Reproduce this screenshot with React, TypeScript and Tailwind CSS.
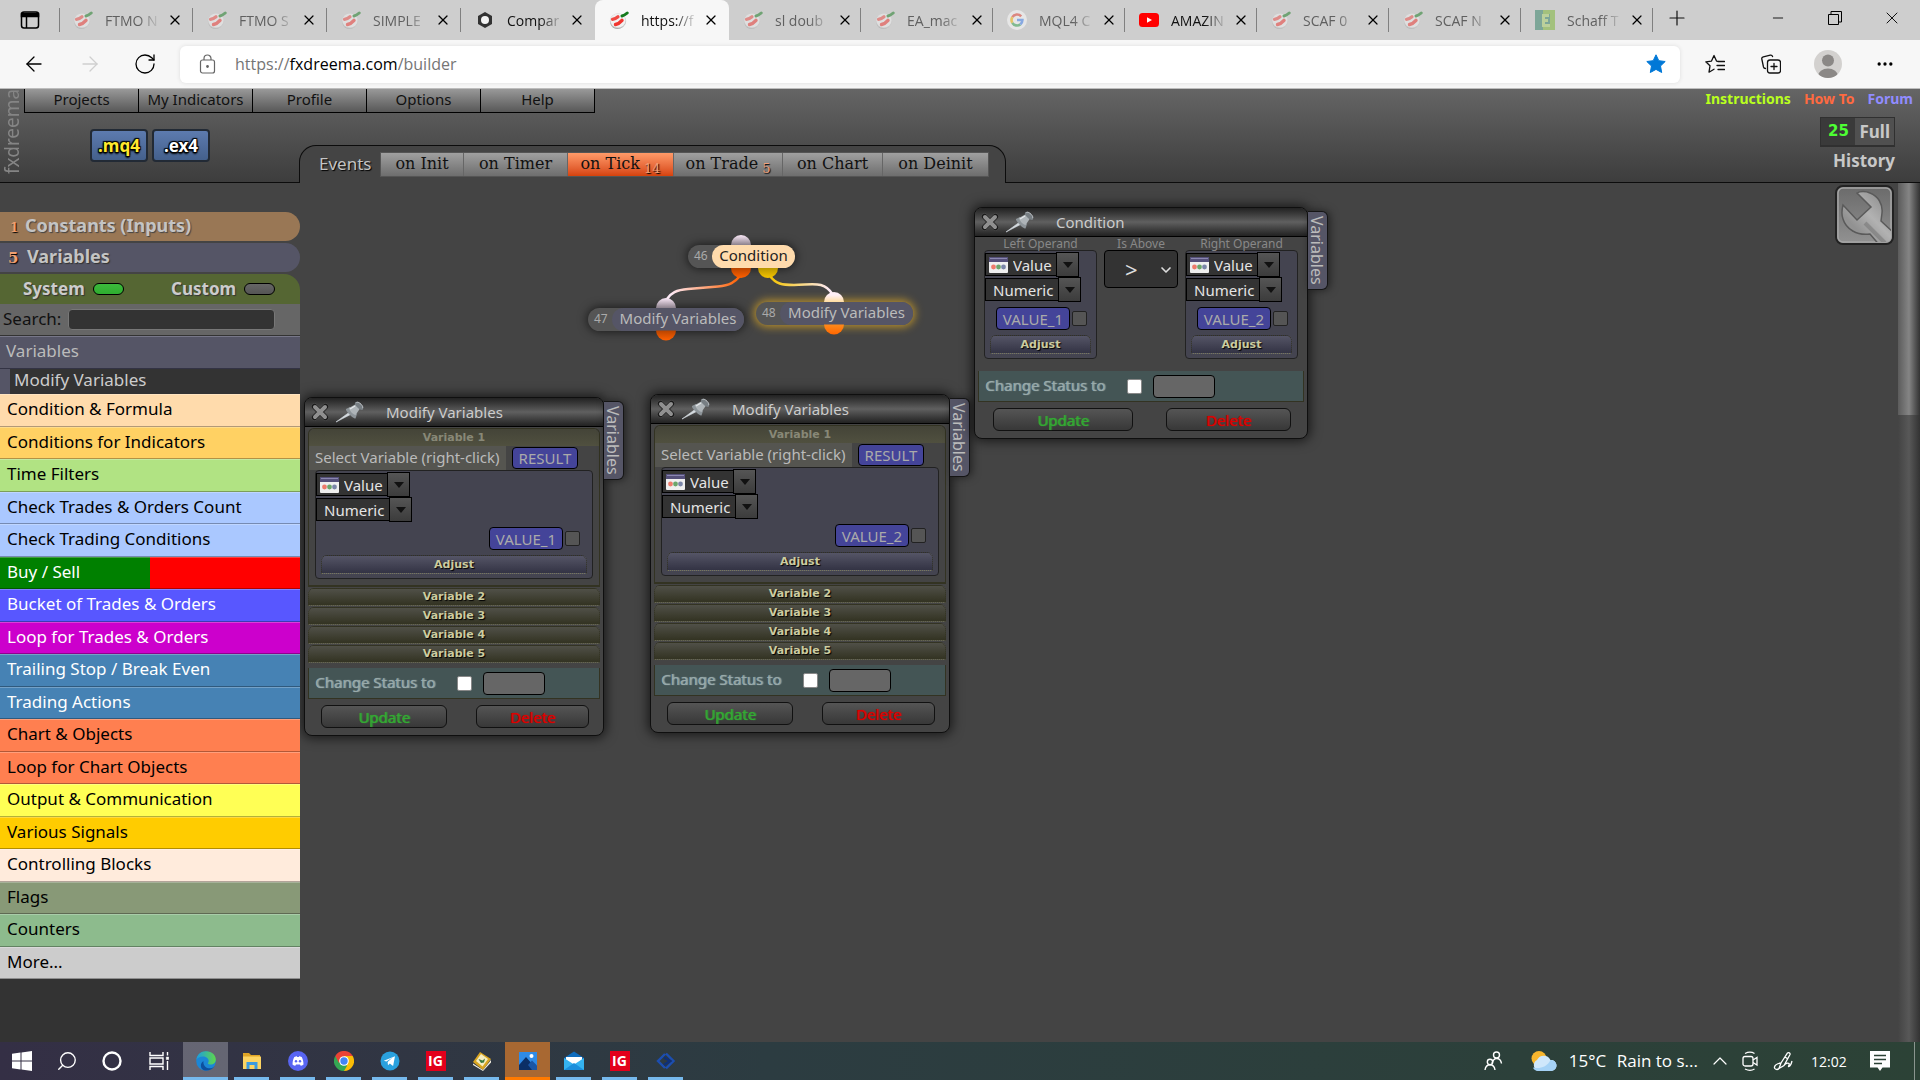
import React from "react";
import {
  ArrowLeft,
  ArrowRight,
  RotateCw,
  X,
  Plus,
  Minus,
  MoreHorizontal,
  ChevronDown,
  ChevronUp,
  Search,
} from "lucide-react";

/* ---------- Browser chrome ---------- */

type Fav = "fx" | "hex" | "google" | "youtube" | "e";

const browserTabs: { title: string; icon: Fav; faded?: boolean; active?: boolean }[] = [
  { title: "FTMO N", icon: "fx", faded: true },
  { title: "FTMO S", icon: "fx", faded: true },
  { title: "SIMPLE", icon: "fx", faded: true },
  { title: "Compar", icon: "hex" },
  { title: "https://f", icon: "fx", active: true },
  { title: "sl doub", icon: "fx", faded: true },
  { title: "EA_mac", icon: "fx", faded: true },
  { title: "MQL4 C", icon: "google", faded: true },
  { title: "AMAZIN", icon: "youtube" },
  { title: "SCAF 0", icon: "fx", faded: true },
  { title: "SCAF N", icon: "fx", faded: true },
  { title: "Schaff T", icon: "e", faded: true },
];

function Favicon({ kind }: { kind: Fav }) {
  if (kind === "fx")
    return (
      <svg viewBox="0 0 20 20" className="size-5">
        <ellipse cx="8.500" cy="13" rx="7" ry="6" fill="#9a9a9a" />
        <ellipse cx="9" cy="11" rx="8.200" ry="7.500" fill="#c4c4c4" />
        <ellipse cx="9" cy="10.500" rx="7.600" ry="6.900" fill="#f1f1f1" />
        <path d="M3.500 9.300c2-.2 3.800-1 5.500-2.500" stroke="#f04a44" strokeWidth="3.200" strokeLinecap="round" fill="none" />
        <path d="M6.500 14.500c2.500-.6 4.800-2.200 6.500-4.200" stroke="#f0352f" strokeWidth="3.400" strokeLinecap="round" fill="none" />
        <path d="M13 6c1.800-.4 3.500-1.500 5.200-3" stroke="#157a1d" strokeWidth="3" strokeLinecap="round" fill="none" />
      </svg>
    );
  if (kind === "hex")
    return (
      <svg viewBox="0 0 20 20" className="size-5">
        <path d="M10 2l7 4v8l-7 4-7-4V6z" fill="#333" />
        <circle cx="10" cy="10" r="4" fill="#f4f4f4" />
      </svg>
    );
  if (kind === "google")
    return (
      <svg viewBox="0 0 20 20" className="size-5">
        <circle cx="10" cy="10" r="10" fill="#fff" />
        <path d="M14.200 6.300A5.500 5.500 0 0 0 5.300 7.200" stroke="#ea4335" strokeWidth="2.600" fill="none" />
        <path d="M5.300 7.200a5.500 5.500 0 0 0 0 5.600" stroke="#fbbc05" strokeWidth="2.600" fill="none" />
        <path d="M5.300 12.800a5.500 5.500 0 0 0 8 1.600" stroke="#34a853" strokeWidth="2.600" fill="none" />
        <path d="M10 10h5.400c0 2-.8 3.400-2.100 4.400" stroke="#4285f4" strokeWidth="2.600" fill="none" />
      </svg>
    );
  if (kind === "youtube")
    return (
      <svg viewBox="0 0 20 20" className="size-5">
        <rect x="0" y="3" width="20" height="14" rx="3.500" fill="#f00" />
        <path d="M8 7.200v5.600l5-2.800z" fill="#fff" />
      </svg>
    );
  return (
    <svg viewBox="0 0 20 20" className="size-5">
      <path d="M0 0h20v20H0z" fill="#2f7f63" />
      <path d="M8 0h12v20h-12v-5h7V4H8z" fill="#79b52e" />
      <path d="M8 4h6v3H10v2h3v3h-3v2h5v3H7V4z" fill="#a9d36a" />
    </svg>
  );
}

function BrowserTabs() {
  return (
    <div className="flex h-10 items-stretch bg-[#cecece]">
      <button aria-label="Tab actions" className="flex w-[59px] items-center justify-center">
        <svg viewBox="0 0 20 20" className="size-5" fill="none" stroke="#000" strokeWidth="1.500">
          <rect x="1.500" y="2" width="17" height="16" rx="2.500" />
          <path d="M1.500 3.500h17v3h-17z" fill="#000" />
          <path d="M6.500 6v12" />
        </svg>
      </button>
      {browserTabs.map((t, i) => {
        const bare = t.active || browserTabs[i + 1]?.active;
        return (
          <div
            key={t.title}
            className={
              (i < 5 ? "w-[134px] " : "w-[132px] ") +
              (t.active
                ? "flex items-center rounded-t-lg bg-[#f7f7f7] pl-3.5"
                : "relative flex items-center pl-3.5")
            }
          >
            {!t.active && i === 0 && <span className="absolute left-0 top-2 h-6 w-px bg-[#808080]" />}
            <span className={t.faded ? "opacity-50" : ""}>
              <Favicon kind={t.icon} />
            </span>
            <span
              className={
                t.faded
                  ? "ml-3 w-[56px] whitespace-nowrap text-[14px] text-[#606060] [mask-image:linear-gradient(to_right,black_60%,transparent)]"
                  : "ml-3 w-[56px] whitespace-nowrap text-[14px] text-[#111] [mask-image:linear-gradient(to_right,black_60%,transparent)]"
              }
            >
              {t.title}
            </span>
            <button aria-label={"Close " + t.title} className="ml-1.5 flex size-4 items-center justify-center text-black">
              <X className="size-4 shrink-0" strokeWidth={1.8} />
            </button>
            {!bare && <span className="absolute right-0 top-2 h-6 w-px bg-[#808080]" />}
          </div>
        );
      })}
      <button aria-label="New tab" className="flex w-12 items-center justify-center pb-1 text-[#111]">
        <Plus className="size-6" strokeWidth={1.2} />
      </button>
      <div className="flex flex-1 justify-end">
        <button aria-label="Minimise" className="flex w-[57px] items-center justify-center pb-1">
          <Minus className="size-4" strokeWidth={1.3} />
        </button>
        <button aria-label="Restore" className="flex w-[57px] items-center justify-center pb-1">
          <svg viewBox="0 0 14 14" className="size-3.5" fill="none" stroke="#000">
            <path d="M.5 3.500h10v10H.5zM3 3V.5h10.500V11H11" />
          </svg>
        </button>
        <button aria-label="Close window" className="flex w-[57px] items-center justify-center pb-1">
          <X className="size-5" strokeWidth={1.1} />
        </button>
      </div>
    </div>
  );
}

function Toolbar() {
  return (
    <div className="flex h-[49px] items-center border-b border-[#bdbdbd] bg-[#f7f7f7] pl-[22px]">
      <button aria-label="Back" className="text-black">
        <ArrowLeft className="size-6" strokeWidth={1.3} />
      </button>
      <button aria-label="Forward" className="ml-8 text-[#cfcfcf]">
        <ArrowRight className="size-6" strokeWidth={1.3} />
      </button>
      <button aria-label="Refresh" className="ml-[31px] text-black">
        <RotateCw className="size-6" strokeWidth={1.3} />
      </button>
      <div className="ml-[23px] flex h-[37px] flex-1 items-center rounded-md bg-white pl-[19px] pr-3.5 shadow-[0_0_4px_#ddd]">
        <svg viewBox="0 0 18 20" className="h-5 w-[18px]" fill="none" stroke="#666" strokeWidth="1.200">
          <rect x="1.500" y="6" width="14" height="13" rx="2" />
          <path d="M5 6V4.500a3.500 3.500 0 0 1 7 0V6" />
          <circle cx="8.500" cy="12.500" r=".8" fill="#444" />
        </svg>
        <button className="ml-[18px] flex-1 text-left text-[16px] leading-6 text-[#757575]">
          https://<span className="text-black">fxdreema.com</span>/builder
        </button>
        <button aria-label="Favourite">
          <svg viewBox="0 0 20 20" className="size-5">
            <path
              d="M10 .8l2.800 5.900 6.400.8-4.700 4.500 1.200 6.500L10 15.400l-5.700 3.100 1.200-6.500L.8 7.500l6.400-.8z"
              fill="#0078d7"
              stroke="#0078d7"
              strokeLinejoin="round"
            />
          </svg>
        </button>
      </div>
      <div className="flex items-center gap-9 px-[25px]">
        <button aria-label="Favourites">
          <svg viewBox="0 0 20 20" className="size-5" fill="none" stroke="#111" strokeWidth="1.300" strokeLinejoin="round" strokeLinecap="round">
            <path d="M13 7.300l-1.500-.2L9 1.500 6.500 7.100.8 7.800 5 11.800 4 18.200l5-3" />
            <path d="M13 7.500h6.500M12 11.500h7.500M13 15.500h6.500" />
          </svg>
        </button>
        <button aria-label="Collections">
          <svg viewBox="0 0 20 20" className="size-5" fill="none" stroke="#111" strokeWidth="1.300" strokeLinejoin="round" strokeLinecap="round">
            <path d="M4.500 14.500c-1 0-1.800-.7-2-1.500L.8 5c-.2-1 .4-1.900 1.500-2.200l7-1.700c1.200-.2 2 .4 2.300 1.500" />
            <rect x="6.500" y="6" width="13" height="13" rx="2.500" />
            <path d="M13 9.500v6M10 12.500h6" />
          </svg>
        </button>
        <button aria-label="Profile picture" className="-mx-[3px]">
          <svg viewBox="0 0 28 28" className="size-7">
            <clipPath id="av">
              <circle cx="14" cy="14" r="14" />
            </clipPath>
            <circle cx="14" cy="14" r="14" fill="#d3d1cf" />
            <g clipPath="url(#av)" fill="#8b8886">
              <circle cx="14" cy="10.500" r="6" />
              <ellipse cx="14" cy="26" rx="10" ry="7.500" />
            </g>
          </svg>
        </button>
        <button aria-label="Settings and more">
          <MoreHorizontal className="size-5" strokeWidth={2} />
        </button>
      </div>
    </div>
  );
}

/* ---------- Application header ---------- */

const menus = ["Projects", "My Indicators", "Profile", "Options", "Help"];

const events = [
  { label: "on Init", cls: "w-[83px]" },
  { label: "on Timer", cls: "w-[104px]" },
  { label: "on Tick", cls: "w-[106px]", count: "14", active: true },
  { label: "on Trade", cls: "w-[109px]", count: "5" },
  { label: "on Chart", cls: "w-[100px]" },
  { label: "on Deinit", cls: "w-[105px]" },
];

function AppHeader() {
  return (
    <header className="flex h-[94px] shrink-0 border-b border-[#0c0c0c] bg-linear-to-b from-[#656565] to-[#3d3d3d] font-['Noto_Sans',sans-serif]">
      <div className="flex w-6 justify-center pb-2 text-[19px] leading-[24px] text-[#858585]">
        <span className="rotate-180 [writing-mode:vertical-rl]">fxdreema</span>
      </div>
      <div className="flex flex-col">
        <nav className="flex h-6 self-start border-b border-l border-black">
          {menus.map((m) => (
            <button
              key={m}
              className="w-[114px] border-r border-black bg-linear-to-b from-[#999] to-[#585858] pb-1 text-[15px] leading-[18px] text-[#111]"
            >
              {m}
            </button>
          ))}
        </nav>
        <div className="flex flex-1">
          <div className="flex items-start gap-1 pl-[66px] pt-4">
            <button className="h-[33px] w-[58px] rounded-sm border-2 border-[#222a35] bg-linear-to-b from-[#5d7baf] to-[#44608c] text-[17px] font-bold leading-7 text-[#ffe92e] [text-shadow:-1px_-1px_1px_#000,1px_1px_1px_#000,1px_-1px_1px_#000,-1px_1px_1px_#000,0_2px_2px_#000]">
              .mq4
            </button>
            <button className="h-[33px] w-[58px] rounded-sm border-2 border-[#222a35] bg-linear-to-b from-[#5d7baf] to-[#44608c] text-[17px] font-bold leading-7 text-white [text-shadow:-1px_-1px_1px_#000,1px_1px_1px_#000,1px_-1px_1px_#000,-1px_1px_1px_#000,0_2px_2px_#000]">
              .ex4
            </button>
          </div>
          <div className="-mb-px ml-[89px] flex h-[38px] items-start self-end rounded-t-[17px] border-x border-t border-[#0c0c0c] bg-[#444] px-[19px] pr-4 pt-[6px]">
            <span className="w-[61px] text-[17px] leading-6 text-[#c4c4c4] [text-shadow:1px_1px_1px_#000]">Events</span>
            <div className="flex border border-[#555]">
              {events.map((e) => (
                <button
                  key={e.label}
                  className={
                    e.cls +
                    " flex h-[23px] justify-center whitespace-nowrap border-r border-[#666] font-['DejaVu_Serif',serif] text-[16px] leading-[22px] text-[#111] last:border-r-0 " +
                    (e.active
                      ? "bg-linear-to-b from-[#ff9a68] to-[#d5420a]"
                      : "bg-linear-to-b from-[#a0a0a0] to-[#6e6e6e]")
                  }
                >
                  {e.label}
                  {e.count && (
                    <span className="ml-1 text-[13px] leading-8 text-[#f0a078] [text-shadow:1px_1px_1px_#000]">{e.count}</span>
                  )}
                </button>
              ))}
            </div>
          </div>
        </div>
      </div>
      <div className="flex flex-1 flex-col items-end text-[#c8c8c8]">
        <nav className="flex gap-[13px] pr-[7px] text-[14px] font-bold leading-5">
          <a href="#instructions" className="text-[#b9ff1e]">Instructions</a>
          <a href="#howto" className="text-[#ff6a40]">How To</a>
          <a href="#forum" className="text-[#918cff]">Forum</a>
        </nav>
        <div className="mr-[25px] mt-2 flex h-[30px] border border-b-2 border-[#303030] bg-[#505050] text-[17px] font-bold leading-[26px]">
          <span className="w-[34px] bg-[#3a3a3a] text-center font-['DejaVu_Sans',sans-serif] text-[15px] text-[#4dff33]">25</span>
          <button className="px-1">Full</button>
        </div>
        <button className="mr-[25px] mt-0.5 text-[17px] font-bold leading-6">History</button>
      </div>
    </header>
  );
}

/* ---------- Sidebar ---------- */

const categories: { label: string; cls: string }[] = [
  { label: "Condition & Formula", cls: "bg-[#ffdbac] text-black" },
  { label: "Conditions for Indicators", cls: "bg-[#ffd163] text-black" },
  { label: "Time Filters", cls: "bg-[#b1e383] text-black" },
  { label: "Check Trades & Orders Count", cls: "bg-[#aac8ff] text-black" },
  { label: "Check Trading Conditions", cls: "bg-[#aac8ff] text-black" },
  { label: "Buy / Sell", cls: "bg-linear-to-r from-[#008000] from-50% to-[#f00] to-50% text-white" },
  { label: "Bucket of Trades & Orders", cls: "bg-[#5857ff] text-white" },
  { label: "Loop for Trades & Orders", cls: "bg-[#cc00cc] text-white" },
  { label: "Trailing Stop / Break Even", cls: "bg-[#4682b4] text-white" },
  { label: "Trading Actions", cls: "bg-[#4682b4] text-white" },
  { label: "Chart & Objects", cls: "bg-[#ff7f50] text-black" },
  { label: "Loop for Chart Objects", cls: "bg-[#ff7f50] text-black" },
  { label: "Output & Communication", cls: "bg-[#ffff55] text-black" },
  { label: "Various Signals", cls: "bg-[#ffcc00] text-black" },
  { label: "Controlling Blocks", cls: "bg-[#ffebdc] text-black" },
  { label: "Flags", cls: "bg-[#889977] text-black" },
  { label: "Counters", cls: "bg-[#8dbb8d] text-black" },
  { label: "More...", cls: "bg-[#ccc] text-black" },
];

const toggle =
  "h-3 w-[31px] appearance-none rounded-full border border-black bg-linear-to-b from-[#666] to-[#555] checked:from-[#3cb93c] checked:to-[#2fae2f]";

function Sidebar() {
  return (
    <aside className="flex w-[300px] shrink-0 flex-col font-['Noto_Sans',sans-serif]">
      <div className="flex flex-col gap-0.5 pt-[29px]">
        <button className="flex h-[29px] items-center rounded-r-full bg-[#997755] pb-0.5 pl-2.5 text-[18px] font-bold text-[#c4c4c4] [text-shadow:1px_1px_1px_#444]">
          <span className="w-[15px] pt-1 text-left font-['DejaVu_Serif',serif] text-[12px] text-[#f0a070] [text-shadow:1px_1px_1px_#000]">1</span>
          Constants (Inputs)
        </button>
        <button className="flex h-[29px] items-center rounded-r-full bg-[#555566] pb-0.5 pl-2 text-[18px] font-bold text-[#c4c4c4] [text-shadow:1px_1px_1px_#333]">
          <span className="w-[19px] pt-1 text-left font-['DejaVu_Serif',serif] text-[15px] text-[#f0a070] [text-shadow:1px_1px_1px_#000]">5</span>
          Variables
        </button>
        <div className="flex h-[30px] items-center rounded-tr-2xl bg-[#556633] pl-[23px] text-[17px] font-bold text-[#ccc] [text-shadow:1px_1px_1px_#333]">
          <label className="flex w-[148px] items-center gap-2">
            System
            <input type="checkbox" defaultChecked className={toggle} />
          </label>
          <label className="flex items-center gap-2">
            Custom
            <input type="checkbox" className={toggle} />
          </label>
        </div>
      </div>
      <div className="flex h-8 items-center border-b border-[#333] bg-[#666] pl-[3px] text-[17px] text-[#111]">
        <label htmlFor="search" className="w-[65px] pb-0.5">Search:</label>
        <input id="search" className="h-[21px] w-[207px] rounded-sm border border-[#777] bg-[#333] px-1 text-[#ccc] outline-none" />
      </div>
      <button className="h-[33px] border-b border-t border-b-[#333344] border-t-[#777788] bg-[#555566] pb-[3px] pl-1.5 text-left text-[17px] leading-6 text-[#bbb]">
        Variables
      </button>
      <button className="h-[25px] border-l-10 border-[#555566] bg-[#333] pb-1 pl-1 text-left text-[17px] leading-5 text-[#ccc]">
        Modify Variables
      </button>
      {categories.map((c) => (
        <button
          key={c.label}
          className={
            c.cls +
            " h-[33px] shrink-0 border-b border-black/30 bg-origin-border pb-0.5 pl-[7px] text-left text-[17px] leading-6 shadow-[inset_0_1px_0_rgba(255,255,255,0.25)] even:h-8"
          }
        >
          {c.label}
        </button>
      ))}
      <div className="flex-1 bg-[#333]" />
    </aside>
  );
}

/* ---------- Canvas: block diagram ---------- */

function BlockNode({
  id,
  label,
  place,
  tone,
  glow,
}: {
  id: string;
  label: string;
  place: string;
  tone: string;
  glow?: boolean;
}) {
  return (
    <div
      className={
        place +
        " absolute flex h-[23px] rounded-full bg-[#555] font-['Noto_Sans',sans-serif] " +
        (glow ? "shadow-[0_0_8px_2px_#b8902c]" : "shadow-[0_0_10px_1px_rgba(0,0,0,0.6)]")
      }
    >
      <span className="w-6 pl-1.5 text-[12px] leading-[22px] text-[#aaa]">{id}</span>
      <span className={tone + " flex-1 rounded-full text-center text-[15px] leading-5"}>{label}</span>
    </div>
  );
}

function Diagram() {
  return (
    <>
      <BlockNode id="46" label="Condition" place="left-[388px] top-[62px] w-[107px]" tone="bg-[#ffdbac] text-[#222]" />
      <BlockNode id="47" label="Modify Variables" place="left-[288px] top-[125px] w-[156px]" tone="bg-[#555566] text-[#bbb]" />
      <BlockNode id="48" label="Modify Variables" place="left-[456px] top-[119px] w-[157px]" tone="bg-[#555566] text-[#bbb]" glow />
      <svg viewBox="270 40 370 130" className="pointer-events-none absolute left-[270px] top-[40px] h-[130px] w-[370px]">
        <defs>
          <linearGradient id="pin" x1="0" y1="0" x2="0" y2="1">
            <stop offset="0" stopColor="#fbe9f8" />
            <stop offset="1" stopColor="#8b808b" />
          </linearGradient>
          <linearGradient id="pinw" x1="0" y1="0" x2="0" y2="1">
            <stop offset="0.300" stopColor="#ffeef6" />
            <stop offset="1" stopColor="#ffdca0" />
          </linearGradient>
          <linearGradient id="org" x1="0" y1="0" x2="0" y2="1">
            <stop offset="0" stopColor="#b84400" />
            <stop offset="1" stopColor="#ff6000" />
          </linearGradient>
          <linearGradient id="orl" x1="0" y1="0" x2="0" y2="1">
            <stop offset="0" stopColor="#ff8a1a" />
            <stop offset="1" stopColor="#ff6600" />
          </linearGradient>
          <linearGradient id="yel" x1="0" y1="0" x2="0" y2="1">
            <stop offset="0" stopColor="#b89600" />
            <stop offset="1" stopColor="#f5c400" />
          </linearGradient>
          <linearGradient id="w1" x1="0" x2="1">
            <stop offset="0.050" stopColor="#fdeaf6" />
            <stop offset="1" stopColor="#ff6000" />
          </linearGradient>
          <linearGradient id="w2" x1="0" x2="1">
            <stop offset="0" stopColor="#f5c400" />
            <stop offset="0.950" stopColor="#fdeaf6" />
          </linearGradient>
        </defs>
        <path d="M367 116C371 110 376 107 388 106L418 103.500C430 102.500 435 99 440 93" stroke="url(#w1)" strokeWidth="2.500" fill="none" />
        <path d="M470 93C476 101 482 102 494 102C512 102 524 97 533 112" stroke="url(#w2)" strokeWidth="2.500" fill="none" />
        <path d="M431 62a10 10 0 0 1 20 0z" fill="url(#pin)" />
        <path d="M431 85a10 10 0 0 0 20 0z" fill="url(#org)" />
        <path d="M458 85a10 10 0 0 0 20 0z" fill="url(#yel)" />
        <path d="M356 125a10 10 0 0 1 20 0z" fill="url(#pin)" />
        <path d="M356 147.500a10 10 0 0 0 20 0z" fill="url(#org)" />
        <path d="M524 119a10 10 0 0 1 20 0z" fill="url(#pinw)" />
        <path d="M524 141.500a10 10 0 0 0 20 0z" fill="url(#orl)" />
      </svg>
    </>
  );
}

/* ---------- Canvas: property windows ---------- */

function CloseX() {
  return (
    <svg viewBox="0 0 18 18" className="h-[18px] w-[18px]">
      <path d="M3.500 3.500l11 11M14.500 3.500l-11 11" stroke="#555" strokeWidth="6.500" strokeLinecap="round" />
      <path d="M3.500 3.500l11 11M14.500 3.500l-11 11" stroke="#1c1c1c" strokeWidth="5.500" strokeLinecap="round" />
      <path d="M4 4l10 10M14 4l-10 10" stroke="#909090" strokeWidth="4" strokeLinecap="round" />
    </svg>
  );
}

function Pin() {
  return (
    <svg viewBox="0 0 30 22" className="h-[22px] w-[30px]">
      <path d="M1 21L14 11.500l1.500 2z" fill="#d5dbe0" stroke="#d5dbe0" strokeWidth=".6" />
      <path d="M11 8l4-2 7 7-1.500 4.500c-1 .5-3-1-5.500-3.500S10.500 9 11 8z" fill="#8d9499" />
      <path d="M14 7l7-4 4 4.500-4.500 6.500c-2 0-6-4-6.500-7z" fill="#aeb4b8" />
      <path d="M20 1.500c1-1.500 3.500-.5 5.500 1.500s3.500 4.500 2.200 5.800c-1.200.8-3.500-.5-5.200-2.300S19.200 2.700 20 1.500z" fill="#777e83" />
      <path d="M21.500 1.500c1.200-.8 3 .2 4.500 1.700s2.200 3 1.500 4" stroke="#c8cdd1" fill="none" />
      <path d="M15 8l5-3" stroke="#e5e8ea" strokeWidth="1.300" />
    </svg>
  );
}

function Window({
  title,
  place,
  children,
}: {
  title: string;
  place: string;
  children: React.ReactNode;
}) {
  return (
    <section className={place + " absolute flex items-start font-['Noto_Sans',sans-serif]"}>
      <div className="flex-1 overflow-hidden rounded-lg border border-[#0f0f0f] bg-[#444] shadow-[0_0_12px_2px_rgba(0,0,0,0.65)]">
        <div className="flex h-[29px] items-center border-b border-black bg-linear-to-b from-[#222] via-[#606060] to-[#222] pl-1.5">
          <button aria-label="Close">
            <CloseX />
          </button>
          <button aria-label="Pin" className="ml-1.5">
            <Pin />
          </button>
          <h2 className="ml-[21px] text-[15px] leading-6 text-[#ccc]">{title}</h2>
        </div>
        {children}
      </div>
      <button className="mt-1 h-[79px] w-5 rounded-r-md border border-l-0 border-[#151515] bg-[#555566] text-[16px] leading-5 text-[#bbb] shadow-[2px_0_8px_rgba(0,0,0,0.5)] [writing-mode:vertical-rl]">
        Variables
      </button>
    </section>
  );
}

function Arrow() {
  return (
    <span className="pointer-events-none absolute right-0 top-0 flex h-[25px] w-[23px] items-center justify-center border border-black bg-linear-to-b from-[#555] to-[#3c3c3c]">
      <svg viewBox="0 0 10 6" className="h-1.5 w-2.5">
        <path d="M0 0h10L5 6z" fill="#111" />
      </svg>
    </span>
  );
}

function TypePickers() {
  return (
    <>
      <div className="relative flex h-[25px] w-[94px] items-center">
        <svg viewBox="0 0 19 16" className="pointer-events-none absolute left-1 h-4 w-[19px]">
          <rect width="19" height="16" rx="1" fill="#efefef" />
          <rect width="19" height="5" fill="#55507a" />
          <path d="M1 1.500h17" stroke="#8a86b0" />
          <circle cx="4.500" cy="10" r="2.400" fill="#ee7b6c" />
          <circle cx="9.500" cy="10" r="2.400" fill="#6ba56b" />
          <circle cx="14.500" cy="10" r="2.400" fill="#7b86a8" />
        </svg>
        <select aria-label="Operand source" className="h-[23px] w-[73px] appearance-none border border-black bg-[#333] pl-[27px] text-[15px] leading-5 text-[#e4e4e4]">
          <option>Value</option>
        </select>
        <Arrow />
      </div>
      <div className="relative flex h-[25px] w-24 items-center">
        <select aria-label="Value type" className="h-[23px] w-[75px] appearance-none border border-black bg-[#333] pl-[7px] text-[15px] leading-5 text-[#e4e4e4]">
          <option>Numeric</option>
        </select>
        <Arrow />
      </div>
    </>
  );
}

function Operand({ value }: { value: string }) {
  return (
    <div className="flex h-[109px] flex-col rounded-sm border border-[#222] bg-[#444450] pt-px">
      <TypePickers />
      <div className="mt-[5px] flex items-center justify-end gap-0.5 pr-[9px] group-data-[wide=true]:pr-3">
        <button className="h-[23px] rounded-sm border border-black bg-[#444499] px-[6px] text-[15px] leading-5 text-[#aaa]">{value}</button>
        <input type="checkbox" aria-label={"Expose " + value} className="size-[15px] appearance-none rounded-xs border border-[#222] bg-[#555]" />
      </div>
      <button className="mx-[5px] mt-[5px] h-[19px] rounded-t-md border-x border-b border-t border-dotted border-[#333322] border-b-[#77775a] bg-linear-to-b from-[#555566] to-[#333344] font-['DejaVu_Sans',sans-serif] text-[11px] font-bold leading-4 text-[#cccca0] [text-shadow:1px_1px_1px_#000]">
        Adjust
      </button>
    </div>
  );
}

function Footer({ update, del }: { update: string; del: string }) {
  return (
    <>
      <label className="mx-[3px] flex h-[31px] items-center border border-t-0 border-[#333322] bg-[#445555] pl-1.5 text-[15px] text-[#99aaaa] [text-shadow:1px_0_1px_#99aaaa]">
        <span className="w-[142px] pb-0.5">Change Status to</span>
        <input type="checkbox" className="size-[15px] appearance-none rounded-xs border border-[#888] bg-white" />
        <input aria-label="Status" className="ml-[11px] h-[23px] w-[62px] rounded-sm border border-black bg-[#666]" />
      </label>
      <div className="flex justify-between pb-[7px] pt-[6px]">
        <button className={update + " h-[23px] rounded-md border border-[#111] bg-linear-to-b from-[#555] to-[#383838] text-[15px] leading-5 text-[#33aa33] [text-shadow:1px_0_1px_#33aa33]"}>
          Update
        </button>
        <button className={del + " h-[23px] rounded-md border border-[#111] bg-linear-to-b from-[#555] to-[#383838] text-[15px] leading-5 text-[#dd0000] [text-shadow:1px_0_1px_#dd0000]"}>
          Delete
        </button>
      </div>
    </>
  );
}

function ModifyWindow({ place, value }: { place: string; value: string }) {
  return (
    <Window title="Modify Variables" place={place}>
      <div className="mx-[3px] mt-px">
        <div className="rounded-t-md border border-b-2 border-[#333322]">
          <h3 className="h-[17px] rounded-t-md bg-linear-to-b from-[#444438] to-[#50503f] text-center font-['DejaVu_Sans',sans-serif] text-[11px] font-bold leading-[18px] text-[#888877]">
            Variable 1
          </h3>
          <div className="flex h-6 items-center">
            <span className="h-6 w-[197px] whitespace-nowrap bg-[#555550] pl-1.5 text-[15px] leading-[22px] text-[#bbb]">
              Select Variable (right-click)
            </span>
            <button className="ml-1.5 h-[22px] w-[66px] rounded-sm border border-black bg-[#444499] text-[15px] leading-5 text-[#aaa]">
              RESULT
            </button>
          </div>
          <div data-wide="true" className="group mx-1.5 mb-1.5">
            <Operand value={value} />
          </div>
        </div>
        {["Variable 2", "Variable 3", "Variable 4", "Variable 5"].map((v) => (
          <button
            key={v}
            className="mt-px block h-[18px] w-full rounded-t-md border border-dotted border-[#333322] border-b-[#666650] bg-linear-to-b from-[#505048] to-[#333322] font-['DejaVu_Sans',sans-serif] text-[11px] font-bold leading-4 text-[#cccca0] [text-shadow:1px_1px_1px_#000]"
          >
            {v}
          </button>
        ))}
      </div>
      <div className="pt-[5px]">
        <Footer update="ml-4 w-[126px]" del="mr-[14px] w-[113px]" />
      </div>
    </Window>
  );
}

function ConditionWindow() {
  return (
    <Window title="Condition" place="left-[674px] top-[24px] w-[354px]">
      <div className="flex justify-between px-[9px] text-[12px] leading-[13px] text-[#888]">
        <div className="w-[113px]">
          <div className="text-center">Left Operand</div>
          <Operand value="VALUE_1" />
        </div>
        <div className="w-[74px]">
          <div className="text-center">Is Above</div>
          <div className="relative">
            <select
              aria-label="Comparison"
              className="h-[38px] w-[74px] appearance-none rounded-sm border border-black bg-[#333] pl-5 text-[22px] leading-8 text-[#ddd]"
            >
              <option>&gt;</option>
            </select>
            <ChevronDown className="pointer-events-none absolute right-1 top-3 size-4 text-[#ddd]" strokeWidth={2.5} />
          </div>
        </div>
        <div className="w-[113px]">
          <div className="text-center">Right Operand</div>
          <Operand value="VALUE_2" />
        </div>
      </div>
      <div className="pt-3">
        <Footer update="ml-[18px] w-[140px]" del="mr-4 w-[125px]" />
      </div>
    </Window>
  );
}

function Canvas() {
  return (
    <main className="relative flex-1 overflow-hidden bg-[#444]">
      <Diagram />
      <ModifyWindow place="left-[4px] top-[214px] w-[320px]" value="VALUE_1" />
      <ModifyWindow place="left-[350px] top-[211px] w-[320px]" value="VALUE_2" />
      <ConditionWindow />
      <button aria-label="Tools" className="absolute right-1 top-0.5 h-[60px] w-[59px]">
        <svg viewBox="0 0 59 60" className="h-[60px] w-[59px]">
          <defs>
            <linearGradient id="wr" x1="0" y1="0" x2="0" y2="1">
              <stop offset="0" stopColor="#6a6a6a" />
              <stop offset="1" stopColor="#929292" />
            </linearGradient>
            <linearGradient id="wm" x1="0.300" y1="0.700" x2="0.800" y2="0.200">
              <stop offset="0" stopColor="#929292" />
              <stop offset="0.500" stopColor="#b2b2b2" />
              <stop offset="1" stopColor="#959595" />
            </linearGradient>
            <clipPath id="wc">
              <rect x="3" y="3" width="53" height="54" rx="5" />
            </clipPath>
          </defs>
          <rect x="1" y="1" width="57" height="58" rx="7" fill="url(#wr)" stroke="#222" strokeWidth="2" />
          <rect x="3" y="3" width="53" height="54" rx="5" fill="none" stroke="#a5a5a5" strokeWidth="1.500" />
          <path
            clipPath="url(#wc)"
            d="M22 8c3-2 9-2 13 0 8 3 13 11 12 20l-1 8L60 49V62H46L35 49c-13 2-24-5-27-15-2-5-1-10 0-14l14 15 14-13z"
            fill="url(#wm)"
            stroke="#5a5a5a"
            strokeWidth="1.500"
          />
          <path d="M30 38l20 20" stroke="#707070" strokeWidth="4" clipPath="url(#wc)" opacity=".5" />
        </svg>
      </button>
    </main>
  );
}

/* ---------- Taskbar ---------- */

function IG() {
  return <span className="flex size-5 items-center justify-center bg-[#e3001b] font-['Open_Sans',sans-serif] text-[14px] font-bold leading-5 text-white">IG</span>;
}

const taskApps: { name: string; icon: React.ReactNode; cls?: string; bar?: string }[] = [
  {
    name: "Edge",
    cls: "bg-white/25",
    icon: (
      <svg viewBox="0 0 20 20" className="size-5">
        <defs>
          <linearGradient id="ed" x1="0" y1="0" x2="1" y2="0">
            <stop offset="0" stopColor="#1b9de2" />
            <stop offset="1" stopColor="#5fd64a" />
          </linearGradient>
        </defs>
        <circle cx="10" cy="10" r="9.800" fill="#1b86d6" />
        <path d="M.3 9C1 3.500 5 .2 10 .2c6 0 9.800 4 9.800 8.300 0 3.500-3 5.500-6 5-2.500-.3-2-1.500-1.300-2.500C13.500 8 10.500 5.500 7 5.500 4 5.500 1.200 7 .3 9z" fill="url(#ed)" />
        <path d="M7.500 10c-.8 5 3.500 8 7.500 7.200 1.500-.3 2.500-1 3.300-1.700C16 19 11 20.500 7.500 19 4 17.500 4 12 7.500 10z" fill="#0d4f9e" />
      </svg>
    ),
  },
  {
    name: "File Explorer",
    icon: (
      <svg viewBox="0 0 20 20" className="size-5">
        <path d="M1 2h6l2 2h9v5H1z" fill="#e0a526" />
        <path d="M1 5.500h18V18H1z" fill="#fcd462" />
        <path d="M4.500 11h11v7h-3v-4h-5v4h-3z" fill="#3b9be0" />
      </svg>
    ),
  },
  {
    name: "Discord",
    icon: (
      <svg viewBox="0 0 20 20" className="size-5">
        <circle cx="10" cy="10" r="10" fill="#5865f2" />
        <path d="M4.500 13.500c0-3 .8-6 1.800-7.500 1-.6 2-.8 2.500-.8l.4.8h1.600l.4-.8c.5 0 1.500.2 2.500.8 1 1.500 1.800 4.500 1.800 7.500-1 .8-2 1.200-2.800 1.300l-.7-1.200H8l-.7 1.200c-.8-.1-1.800-.5-2.800-1.300z" fill="#fff" />
        <circle cx="8" cy="10.200" r="1.200" fill="#5865f2" />
        <circle cx="12" cy="10.200" r="1.200" fill="#5865f2" />
      </svg>
    ),
  },
  {
    name: "Chrome",
    icon: (
      <svg viewBox="0 0 20 20" className="size-5">
        <path d="M10 10V.5L18.700 5A10 10 0 0 1 10 20z" fill="#fbbc05" />
        <path d="M10 10L1.300 5A10 10 0 0 0 10 20l3-5z" fill="#34a853" />
        <path d="M1.300 5A10 10 0 0 1 18.700 5H10l-5 7z" fill="#ea4335" />
        <circle cx="10" cy="10" r="4.800" fill="#fff" />
        <circle cx="10" cy="10" r="3.700" fill="#4285f4" />
      </svg>
    ),
  },
  {
    name: "Telegram",
    icon: (
      <svg viewBox="0 0 20 20" className="size-5">
        <circle cx="10" cy="10" r="9.500" fill="#2aa1de" />
        <path d="M3.800 9.800L15 5.300l-1.900 9.600-3.300-2.500-1.800 1.900-.4-3.200 5-4.500-6.200 4z" fill="#fff" />
      </svg>
    ),
  },
  { name: "IG Trading", icon: <IG /> },
  {
    name: "Editor",
    icon: (
      <svg viewBox="0 0 20 20" className="size-5">
        <path d="M1 11L8 1l11 7-8 11z" fill="#d9a520" />
        <path d="M1 12.500L11 19l8-10v2.500L11 20 1 14z" fill="#f4efe0" />
        <path d="M4 10l5-7 7 5-5.500 7.500z" fill="#f6edc0" />
        <path d="M6.500 8l4 1.500 2.500-2-1 4-3 .5z" fill="#3c7a3c" />
      </svg>
    ),
  },
  {
    name: "Photos",
    cls: "bg-[#a86832]",
    bar: "bg-[#ff7a00] w-full",
    icon: (
      <svg viewBox="0 0 20 20" className="size-5">
        <rect x="1" y="1" width="18" height="18" fill="#2f8be6" />
        <path d="M1 14l7-8 11 12.500v.5H1z" fill="#0b2f66" />
        <path d="M10 14l4-4.500 5 5V19h-5z" fill="#1b56a5" />
        <circle cx="13.500" cy="5" r="2" fill="#fff" />
      </svg>
    ),
  },
  {
    name: "Mail",
    icon: (
      <svg viewBox="0 0 20 20" className="size-5">
        <path d="M0 7l10-6.500L20 7v12H0z" fill="#0f6cbd" />
        <path d="M2 6h16v7H2z" fill="#fff" />
        <path d="M0 7l10 6.500L20 7v12H0z" fill="#35b3f0" />
        <path d="M0 19l10-7 10 7z" fill="#1b8fdc" />
      </svg>
    ),
  },
  { name: "IG Markets", icon: <IG /> },
  {
    name: "Terminal",
    icon: (
      <svg viewBox="0 0 20 20" className="size-5" fill="none" stroke="#1c4eb0" strokeWidth="2.400">
        <path d="M9 3L2 10l7 7M10 2.500L17.500 10 10 17.500" />
        <path d="M8 6.500l6 3.500-6 4" stroke="#0d2f7a" />
      </svg>
    ),
  },
];

function Taskbar() {
  return (
    <footer className="flex h-[38px] shrink-0 items-stretch bg-linear-to-r from-[#342f45] via-[#2c3c41] via-40% to-[#2c4236] font-['Open_Sans',sans-serif] text-white">
      <button aria-label="Start" className="flex w-11 items-center justify-center">
        <svg viewBox="0 0 20 20" className="size-5" fill="#fff">
          <path d="M0 2.800L8.500 1.600V9.500H0zM9.500 1.400L20 0v9.500H9.500zM0 10.500h8.500v7.900L0 17.200zM9.500 10.500H20V20L9.500 18.600z" />
        </svg>
      </button>
      <button aria-label="Search" className="flex w-[46px] items-center justify-center">
        <Search className="size-[22px] -scale-x-100" strokeWidth={1.5} />
      </button>
      <button aria-label="Cortana" className="flex w-11 items-center justify-center">
        <svg viewBox="0 0 20 20" className="size-5" fill="none" stroke="#fff" strokeWidth="2.400">
          <circle cx="10" cy="10" r="8.500" />
        </svg>
      </button>
      <button aria-label="Task view" className="flex w-[49px] items-center justify-center">
        <svg viewBox="0 0 20 20" className="size-5" fill="none" stroke="#fff" strokeWidth="1.400">
          <path d="M1 1v3.500h13V1M1 19v-3.500h13V19M1 7h13v6H1zM18.500 1v3.500M18.500 10v9" />
          <path d="M17.300 6h2.400v2.500h-2.400z" fill="#fff" strokeWidth=".5" />
        </svg>
      </button>
      {taskApps.map((a) => (
        <button key={a.name} aria-label={a.name} className={(a.cls ?? "") + " relative mr-px flex w-[45px] items-center justify-center"}>
          {a.icon}
          <span className={(a.bar ?? (a.name === "Edge" ? "w-[45px] bg-[#76b9ed]" : "w-[35px] bg-[#76b9ed]")) + " absolute bottom-0 h-[3px]"} />
        </button>
      ))}
      <div className="flex flex-1 items-center justify-end">
        <button aria-label="People" className="mr-7">
          <svg viewBox="0 0 19 20" className="h-5 w-[19px]" fill="none" stroke="#fff" strokeWidth="1.400">
            <circle cx="12.500" cy="4" r="3" />
            <circle cx="6" cy="11" r="2.700" />
            <path d="M8 12.500c1-3.500 2.500-5 4.500-5s4.500 1.500 5 5M1 19c.5-3.500 2-5.200 5-5.200s4.500 1.700 5 5.200" />
          </svg>
        </button>
        <button className="flex items-center text-[17px] leading-6">
          <svg viewBox="0 0 26 20" className="mr-3 h-5 w-[26px]">
            <circle cx="8" cy="7.500" r="7.500" fill="#f8b62d" />
            <path d="M7 20a6 6 0 0 1-1-11 7.500 7.500 0 0 1 13.500 0A5.500 5.500 0 0 1 20.500 20z" fill="#cfe7fb" />
            <path d="M7 20c-2 0-4.500-1.500-5-3.500 6 1.500 14 0 17.500-7.500A5.500 5.500 0 0 1 20.500 20z" fill="#a5d2f6" />
          </svg>
          <span className="w-12 text-left">15°C</span>
          <span>Rain to s...</span>
        </button>
        <button aria-label="Show hidden icons" className="ml-2.5">
          <ChevronUp className="size-6" strokeWidth={1.2} />
        </button>
        <button aria-label="Meet now" className="ml-2.5">
          <svg viewBox="0 0 16 20" className="h-5 w-4" fill="none" stroke="#fff" strokeWidth="1.300">
            <rect x="1" y="5.500" width="10" height="9.500" rx="2" />
            <path d="M11 9l4-2.500v7.500L11 11.500M3 2.500c3-1.500 7-1.500 9.500 0M3 18c3 1.500 7 1.500 9.500 0" />
          </svg>
        </button>
        <button aria-label="Pen workspace" className="ml-[15px]">
          <svg viewBox="0 0 20 20" className="size-5" fill="none" stroke="#fff" strokeWidth="1.300">
            <path d="M6 17.500L8 12 14.500 2c1-1 3 .2 2.500 1.500L11 14.500zM6 17.500c-2 2-5 .5-4.500-1.500S5 12.500 8 12M11 14.500c1-2 4-3 5-2s-1.500 3.500 0 3 2.500-3.500 3-5.500M12 6l3 2" />
          </svg>
        </button>
        <span className="ml-[18px] w-[59px] text-[14px]">12:02</span>
        <button aria-label="Notifications" className="mr-6">
          <svg viewBox="0 0 20 20" className="size-5">
            <path d="M0 0h20v16.500h-7.500L10 20l-2.500-3.500H0z" fill="#fff" />
            <path d="M4 4.500h12M4 8.500h12M4 12.500h8" stroke="#2c4236" strokeWidth="1.300" />
          </svg>
        </button>
        <span className="h-full w-1.5 border-l border-[#8a958f]" />
      </div>
    </footer>
  );
}

export default function App() {
  return (
    <div className="flex h-screen flex-col overflow-hidden bg-[#444] font-['Open_Sans',sans-serif]">
      <BrowserTabs />
      <Toolbar />
      <AppHeader />
      <div className="flex min-h-0 flex-1">
        <Sidebar />
        <Canvas />
        <div className="w-[22px] bg-linear-to-r from-[#444] via-[#585858] to-[#333]">
          <div className="h-[232px] bg-linear-to-r from-[#5c5c5c] via-[#858585] to-[#333]" />
        </div>
      </div>
      <Taskbar />
    </div>
  );
}
